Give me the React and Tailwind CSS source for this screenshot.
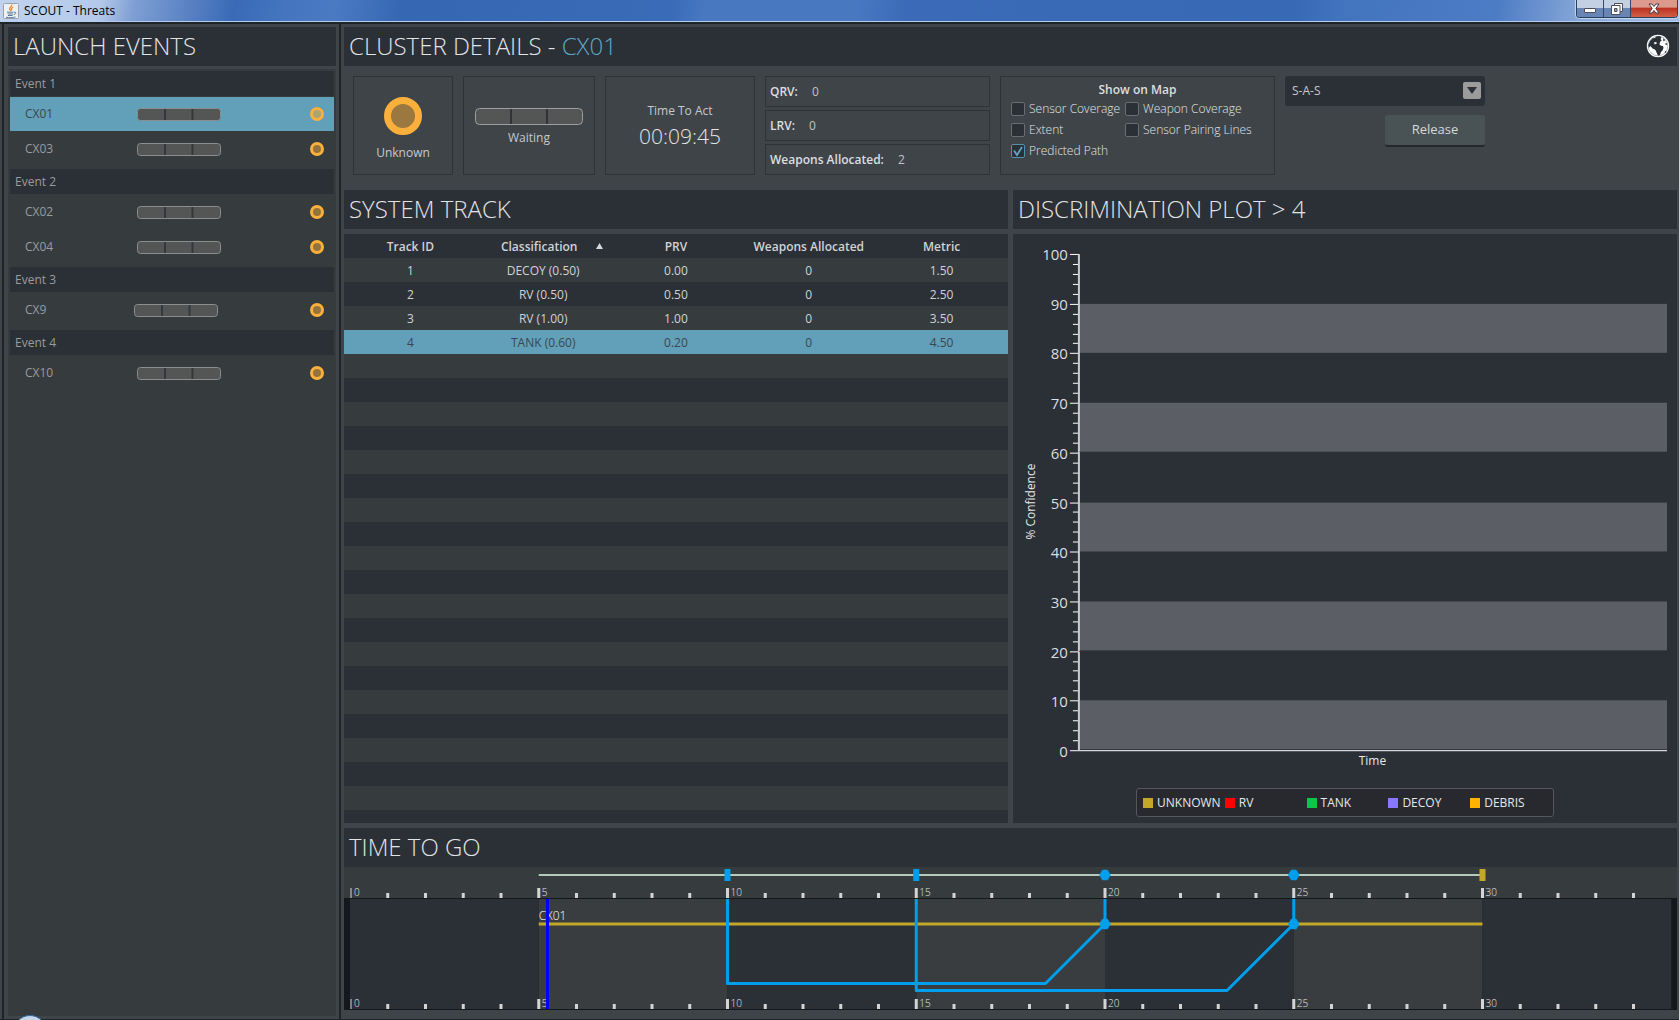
import React from "react";

const EVENTS = [
  { name: "Event 1", clusters: ["CX01", "CX03"] },
  { name: "Event 2", clusters: ["CX02", "CX04"] },
  { name: "Event 3", clusters: ["CX9"] },
  { name: "Event 4", clusters: ["CX10"] },
];

const TRACKS = [
  ["1", "DECOY (0.50)", "0.00", "0", "1.50"],
  ["2", "RV (0.50)", "0.50", "0", "2.50"],
  ["3", "RV (1.00)", "1.00", "0", "3.50"],
  ["4", "TANK (0.60)", "0.20", "0", "4.50"],
];

const LEGEND = [
  ["UNKNOWN", "#c3a728"],
  ["RV", "#ff0000"],
  ["TANK", "#0cc64a"],
  ["DECOY", "#8877ff"],
  ["DEBRIS", "#ffb200"],
];

function PanelTitle({ children, className = "" }) {
  return (
    <h2 className={`flex h-[39px] shrink-0 items-center bg-[#2b2f36] px-[5px] pb-0.5 text-[24px] leading-none font-light text-[#e2e4e6] ${className}`}>
      {children}
    </h2>
  );
}

function StatusPill({ className, large }) {
  return (
    <svg className={className} viewBox={large ? "0 0 108 17" : "0 0 84 13"} aria-hidden="true">
      {large ? (
        <>
          <rect x="0.5" y="0.5" width="107" height="16" rx="4" fill="#545655" stroke="#9b9e9f" />
          <path d="M36 1v15M72 1v15" stroke="#303438" strokeWidth="2" />
        </>
      ) : (
        <>
          <rect x="0.5" y="0.5" width="83" height="12" rx="3" fill="#545655" stroke="#8b8e8f" />
          <path d="M28 1v11M55.5 1v11" stroke="#34383b" strokeWidth="2" />
        </>
      )}
    </svg>
  );
}

function JavaIcon() {
  return (
    <svg className="h-4 w-4" viewBox="0 0 16 16" aria-hidden="true">
      <rect x="0.5" y="0.5" width="15" height="15" rx="1" fill="#eef0f2" stroke="#9aa3ad" />
      <path d="M8.800 1.500c.8 1.800-2.600 3-2.200 4.600.2.700 1 1.100 1.300 1.800M10.300 4.300C8.800 5 7.800 5.800 8.700 7.400" fill="none" stroke="#e8862c" strokeWidth="1.200" />
      <path d="M4 9.200h6.500M4.700 11h5.200M5 12.500h4.500M3 14.200c3 .8 7 .6 9.500-.3M11 9.200c2.500-.5 2.500 2-.3 2.300" fill="none" stroke="#5b7c9b" strokeWidth="1" />
    </svg>
  );
}

function TitleBar() {
  return (
    <header className="flex h-[22px] shrink-0 items-start justify-between border-b border-[#b5cdf0] bg-[linear-gradient(100deg,#c0d2ee_0%,#b4c9ea_6%,#7f9fd4_8%,#3a6ab6_14%,#4475be_17%,#4a7ac2_20%,#3667b2_24%,#3a6bb8_40%,#4878c0_42%,#4878c0_51%,#3b6bb8_54%,#3869b5_77%,#4374be_80%,#4c7cc4_89%,#86a6d8_94%,#a5bee4_100%)]">
      <div className="flex h-[21px] items-center gap-[5px] pl-[3px]">
        <JavaIcon />
        <h1 className="text-[12px] leading-none text-black">SCOUT - Threats</h1>
      </div>
      <div className="mr-px flex h-[18px] overflow-hidden rounded-b-[4px] border border-t-0 border-[#2c3f5c] shadow-[0_0_1px_1px_#c4d6f0]">
        <button type="button" aria-label="Minimize" className="flex w-[27px] items-center justify-center border-r border-[#33486a] bg-linear-to-b from-[#c3cfe2] from-45% to-[#6786b6] to-50%">
          <svg className="h-3 w-3" viewBox="0 0 12 12"><rect x="0.500" y="5.500" width="11" height="4" rx="0.500" fill="#fff" stroke="#4b4f5c" /></svg>
        </button>
        <button type="button" aria-label="Restore" className="flex w-[27px] items-center justify-center border-r border-[#33486a] bg-linear-to-b from-[#c3cfe2] from-45% to-[#6786b6] to-50%">
          <svg className="h-3 w-3" viewBox="0 0 12 12">
            <path d="M3.500 .5h8v8h-8z" fill="#fff" stroke="#4b4f5c" />
            <path d="M.5 2.500h8.500v9H.500z" fill="#fff" stroke="#4b4f5c" />
            <path d="M3.500 5.500h2.500v3H3.500z" fill="#8fa5c8" stroke="#4b4f5c" />
          </svg>
        </button>
        <button type="button" aria-label="Close" className="flex w-[46px] items-center justify-center bg-linear-to-b from-[#dc9a8e] from-40% via-[#bd3323] via-50% to-[#cf6046]">
          <svg className="h-[11px] w-3" viewBox="0 0 12 11"><path d="M1 1h3l2 2.500L8 1h3L7.800 5.500 11 10H8L6 7.500 4 10H1l3.200-4.500z" fill="#fff" stroke="#4b3a48" /></svg>
        </button>
      </div>
    </header>
  );
}

function LaunchEvents() {
  return (
    <aside className="flex w-[339px] shrink-0 flex-col border-x-2 border-[#1f2427] bg-[#3f4448] pt-[3px] pr-[3px] pb-[3px] pl-1">
      <PanelTitle>LAUNCH EVENTS</PanelTitle>
      <div className="mt-[3px] flex-1 bg-[#363b3e] p-0.5">
        {EVENTS.map((event) => (
          <section key={event.name} className="pb-0.5">
            <h3 className="mb-px flex h-[25px] items-center bg-[#2b2f36] px-[5px] text-[12px] leading-none text-[#999c9e]">{event.name}</h3>
            <ul>
              {event.clusters.map((id) => {
                const active = id === "CX01";
                return (
                  <li key={id} className="pb-px">
                    <button
                      type="button"
                      className={`grid h-[34px] w-full grid-cols-[112px_84px_1fr] items-center pr-[10px] pl-[15px] text-left text-[12px] leading-none ${active ? "bg-[#629fb9] text-[#3a474f]" : "text-[#999c9e]"}`}
                    >
                      <span>{id}</span>
                      <StatusPill className={id === "CX9" ? "-ml-[3px] h-[13px] w-[84px]" : "h-[13px] w-[84px]"} />
                      <span className={`size-[14px] justify-self-end rounded-full border-3 border-[#fbb03b] ${active ? "bg-[#aca470]" : "bg-[#94733c]"}`} />
                    </button>
                  </li>
                );
              })}
            </ul>
          </section>
        ))}
      </div>
    </aside>
  );
}

function Stat({ label, value }) {
  return (
    <div className="flex flex-1 items-center gap-[14px] border border-[#2f3337] px-1 text-[12px] leading-none">
      <dt className="font-semibold text-[#dcdee0]">{label}</dt>
      <dd className="text-[#c0c3c5]">{value}</dd>
    </div>
  );
}

function MapOption({ id, label, checked }) {
  return (
    <div className="flex h-[21px] items-center gap-1">
      <span className="relative flex size-[14px]">
        <input
          id={id}
          type="checkbox"
          defaultChecked={checked}
          className="peer size-[14px] appearance-none rounded-[2px] border border-[#6b6e70] bg-[#2b2f36] checked:border-[#4c93ad]"
        />
        <svg className="pointer-events-none absolute inset-0 hidden peer-checked:block" viewBox="0 0 14 14" aria-hidden="true">
          <path d="M3 6.500l3 4.500 5-8" fill="none" stroke="#5ba5c2" strokeWidth="1.800" />
        </svg>
      </span>
      <label htmlFor={id} className="text-[12px] leading-none font-light whitespace-nowrap text-[#e2e4e6]">{label}</label>
    </div>
  );
}

function Globe() {
  return (
    <svg className="size-6" viewBox="0 0 24 24" aria-hidden="true">
      <circle cx="12" cy="12" r="11.200" fill="#fff" />
      <circle cx="12" cy="12" r="9.800" fill="#fff" stroke="#8b8f94" strokeWidth="0.600" />
      <path d="M10 2.500L13.500 2l2 1.200-1 1.800 1.300 1.200L14 8l-.5 2.500 1.500 1.200 2 .3.500 2-1 2.500-1.500 1.500L14 21l-2 .8-1.300-3-1-2.300-1.200-1.300-2-.7-2-2.500L2.800 14l-.5-3L4 7l2.500-2.800L9 4z" fill="#2b2f36" />
      <path d="M3.500 13l2.200 1.200L7.500 17l.5 2.500-1.500-.8-2-2.700zM7.800 8.500l2.500-.5.5 1.500-2 1z" fill="#fff" />
      <path d="M17.500 5l1.500 1-1.500 1zM20 9l1 1.500-1.200.2zM19 18.500l1-1.500-.2 1.800zM17 3.800l.8.600" fill="#2b2f36" stroke="#2b2f36" strokeWidth="0.500" />
    </svg>
  );
}

function ClusterSummary() {
  return (
    <section className="flex h-[124px] shrink-0 gap-[10px] py-[10px] pr-[10px] pb-[15px] pl-[9px]">
      <div className="flex w-[100px] flex-col items-center justify-center gap-3 border border-[#2f3337] pt-1">
        <span className="size-[38px] rounded-full border-[7px] border-[#fbb03b] bg-[#9a783f]" />
        <span className="text-[12px] leading-none text-[#c6c9cb]">Unknown</span>
      </div>
      <div className="flex w-[132px] flex-col items-center justify-center gap-[7px] border border-[#2f3337]">
        <StatusPill large className="h-[17px] w-[108px]" />
        <span className="text-[12px] leading-none text-[#c6c9cb]">Waiting</span>
      </div>
      <div className="flex w-[150px] flex-col items-center justify-center gap-[9px] border border-[#2f3337]">
        <span className="text-[12px] leading-none text-[#c6c9cb]">Time To Act</span>
        <span className="text-[21px] leading-none font-light text-[#e2e4e6]">00:09:45</span>
      </div>
      <dl className="flex w-[225px] flex-col gap-[3px]">
        <Stat label="QRV:" value="0" />
        <Stat label="LRV:" value="0" />
        <Stat label="Weapons Allocated:" value="2" />
      </dl>
      <div role="group" aria-labelledby="map-layers" className="flex w-[275px] flex-col border border-[#2f3337] px-[10px] pt-[7px]">
        <p id="map-layers" className="mb-0.5 text-center text-[12px] leading-none font-semibold text-[#dcdee0]">Show on Map</p>
        <div className="grid grid-cols-[114px_1fr]">
          <MapOption id="sensor-coverage" label="Sensor Coverage" />
          <MapOption id="weapon-coverage" label="Weapon Coverage" />
          <MapOption id="extent" label="Extent" />
          <MapOption id="pairing" label="Sensor Pairing Lines" />
          <MapOption id="path" label="Predicted Path" checked />
        </div>
      </div>
      <div className="flex w-[200px] flex-col items-end gap-[9px]">
        <div className="relative w-full">
          <select aria-label="Firing doctrine" className="h-[30px] w-full appearance-none rounded-[3px] bg-[#2b2f36] px-[7px] text-[12px] text-[#c6c9cb]">
            <option>S-A-S</option>
          </select>
          <span className="pointer-events-none absolute top-[6px] right-1 flex h-[17px] w-[18px] items-center justify-center rounded-[2px] bg-[#9b9b9c]">
            <svg className="h-[7px] w-[10px]" viewBox="0 0 10 7" aria-hidden="true"><path d="M0 0h10L5 7z" fill="#2b2f36" /></svg>
          </span>
        </div>
        <button type="button" className="h-8 w-[100px] rounded-[3px] border-b-2 border-[#22282b] bg-[#495356] text-[13px] text-[#d6d8d9]">Release</button>
      </div>
    </section>
  );
}

function SystemTrack() {
  return (
    <section className="flex min-w-0 flex-1 flex-col gap-[5px]">
      <PanelTitle>SYSTEM TRACK</PanelTitle>
      <div className="flex-1 bg-[repeating-linear-gradient(#2b2f36_0px_24px,#363b3e_24px_48px)]">
        <table className="w-full table-fixed text-center text-[12px] leading-none text-[#d0d3d4]">
          <thead>
            <tr className="h-6">
              <th scope="col" className="pt-0.5 font-semibold">Track ID</th>
              <th scope="col" className="relative pt-0.5 pr-2 font-semibold">
                Classification
                <svg className="absolute top-[9px] right-[7px] h-[6px] w-[7px]" viewBox="0 0 7 6" aria-hidden="true"><path d="M3.500 0L7 6H0z" fill="#d6d8d9" /></svg>
              </th>
              <th scope="col" className="pt-0.5 font-semibold">PRV</th>
              <th scope="col" className="pt-0.5 font-semibold">Weapons Allocated</th>
              <th scope="col" className="pt-0.5 font-semibold">Metric</th>
            </tr>
          </thead>
          <tbody>
            {TRACKS.map((row) => (
              <tr key={row[0]} className={row[0] === "4" ? "h-6 bg-[#629fb9] text-[#3a474f]" : "h-6"}>
                {row.map((cell, i) => (
                  <td key={i} className="pt-0.5">{cell}</td>
                ))}
              </tr>
            ))}
          </tbody>
        </table>
      </div>
    </section>
  );
}

const plotY = (v) => 517 - v * 4.97;

function DiscriminationPlot() {
  const ticks = Array.from({ length: 51 }, (_, i) => i * 2);
  return (
    <section className="flex min-w-0 flex-1 flex-col gap-[5px]">
      <PanelTitle>DISCRIMINATION PLOT &gt; 4</PanelTitle>
      <div className="flex-1 bg-[#2b2f36]">
        <svg className="h-auto w-full" viewBox="1 0 665 543" role="img" aria-label="Confidence over time">
          {[90, 70, 50, 30, 10].map((v) => (
            <rect key={v} x="67" y={Math.round(plotY(v))} width="589" height="49" fill="#5c5e66" />
          ))}
          {ticks.map((v) => {
            const major = v % 10 === 0;
            const y = Math.round(plotY(v)) + 0.5;
            return (
              <g key={v}>
                <path d={`M${major ? 58 : 61} ${y}H67`} stroke="#fff" />
                {major && (
                  <text x="56" y={y + 6} textAnchor="end" fontSize="15" fill="#dcdee0">{v}</text>
                )}
              </g>
            );
          })}
          <path d="M67 20V517" stroke="#c9cbcd" strokeWidth="2" />
          <path d="M67 517.500H656" stroke="#fff" />
          <path d="M67 218h1" stroke="#0cc64a" />
          <path d="M67 418h1" stroke="#ff0000" />
          <text x="361" y="532" textAnchor="middle" fontSize="12" fill="#e6e8e9">Time</text>
          <text x="23" y="268" transform="rotate(-90 23 268)" textAnchor="middle" fontSize="12" fill="#e6e8e9">% Confidence</text>
        </svg>
        <ul className="mx-auto mt-3 mb-[5px] grid h-[29px] w-[418px] grid-cols-5 items-center rounded-[3px] border border-[#54575f] bg-[#27292f] pr-px pl-[6px]">
          {LEGEND.map(([label, color]) => (
            <li key={label} className="flex items-center gap-1 text-[12px] leading-none text-[#e6e8e9]">
              <span className="size-[10px] shrink-0" style={{ backgroundColor: color }} />
              {label}
            </li>
          ))}
        </ul>
      </div>
    </section>
  );
}

const timeX = (t) => 6 + t * 37.75;

function TimeScale({ y }) {
  return (
    <g>
      {Array.from({ length: 35 }, (_, t) => {
        const major = t % 5 === 0;
        const x = t === 0 ? 7 : timeX(t);
        return (
          <g key={t}>
            <path d={`M${x} ${major ? y - 10 : y - 5}V${y}`} stroke="#d4d4d4" strokeWidth={t === 0 ? 1 : 3} />
            {major && <text x={x + 3} y={y - 2} fontSize="10" fontWeight="300" fill="#e6e8e9">{t}</text>}
          </g>
        );
      })}
    </g>
  );
}

function Hex({ x, y }) {
  return <path d={`M${x - 5.500} ${y}l3-5h5l3 5-3 5h-5z`} fill="#009fee" stroke="#009fee" strokeWidth="0.500" />;
}

function TimeToGo() {
  const t20 = timeX(20);
  const t25 = timeX(25);
  return (
    <section className="flex flex-col">
      <PanelTitle>TIME TO GO</PanelTitle>
      <svg className="h-auto w-full" viewBox="0 0 1333 143" role="img" aria-label="Time to go timeline">
        <rect width="1333" height="31" fill="#363b3e" />
        <rect y="31" width="1333" height="112" fill="#14171c" />
        {[0, 5, 10, 15, 20, 25, 30].map((t, i) => (
          <rect key={t} x={timeX(t)} y="32" width="188.750" height="110" fill={i % 2 ? "#3a3d3f" : "#2b2f36"} />
        ))}
        <path d={`M${timeX(5)} 8H${timeX(30)}`} stroke="#b4cbbc" strokeWidth="2" />
        <TimeScale y={31} />
        <TimeScale y={142} />
        <path d={`M${timeX(5)} 57H${timeX(30)}`} stroke="#c3a728" strokeWidth="3" />
        <text x={timeX(5)} y="53" fontSize="12" fontWeight="300" fill="#ffffff">CX01</text>
        <path d="M203.500 32V142" stroke="#0000ff" strokeWidth="3" />
        <g fill="none" stroke="#009fee" strokeWidth="3" strokeLinejoin="round">
          <path d={`M${timeX(10)} 32V116.500H701.500L${t20} 57V32`} />
          <path d={`M${timeX(15)} 32V123.500H883L${t25} 57V32`} />
        </g>
        <rect x={timeX(10) - 3} y="2" width="6" height="12" fill="#009fee" />
        <rect x={timeX(15) - 3} y="2" width="6" height="12" fill="#009fee" />
        <rect x={timeX(30) - 3} y="2" width="6" height="12" fill="#c3a728" />
        <Hex x={t20} y={8} />
        <Hex x={t25} y={8} />
        <Hex x={t20} y={57} />
        <Hex x={t25} y={57} />
      </svg>
    </section>
  );
}

export default function App() {
  return (
    <div className="relative flex min-h-screen flex-col overflow-hidden bg-[#3f4448] font-['Open_Sans','Noto_Sans',sans-serif]">
      <TitleBar />
      <div className="flex flex-1 border-y-2 border-[#1f2427] pl-0.5 [border-bottom-width:1px]">
        <LaunchEvents />
        <main className="flex min-w-0 flex-1 flex-col pt-[3px] pr-0.5 pb-[9px] pl-[3px]">
          <PanelTitle className="justify-between">
            <span>CLUSTER DETAILS - <span className="text-[#5fa8c6]">CX01</span></span>
            <button type="button" aria-label="Show on globe" className="mr-0.5"><Globe /></button>
          </PanelTitle>
          <ClusterSummary />
          <div className="flex flex-1 gap-[5px]">
            <SystemTrack />
            <DiscriminationPlot />
          </div>
          <div className="mt-[5px]">
            <TimeToGo />
          </div>
        </main>
      </div>
      <div className="absolute -bottom-[29px] left-[13px] size-[34px] rounded-full border border-[#2f6ea3] bg-[#c6d6e6]" />
    </div>
  );
}
